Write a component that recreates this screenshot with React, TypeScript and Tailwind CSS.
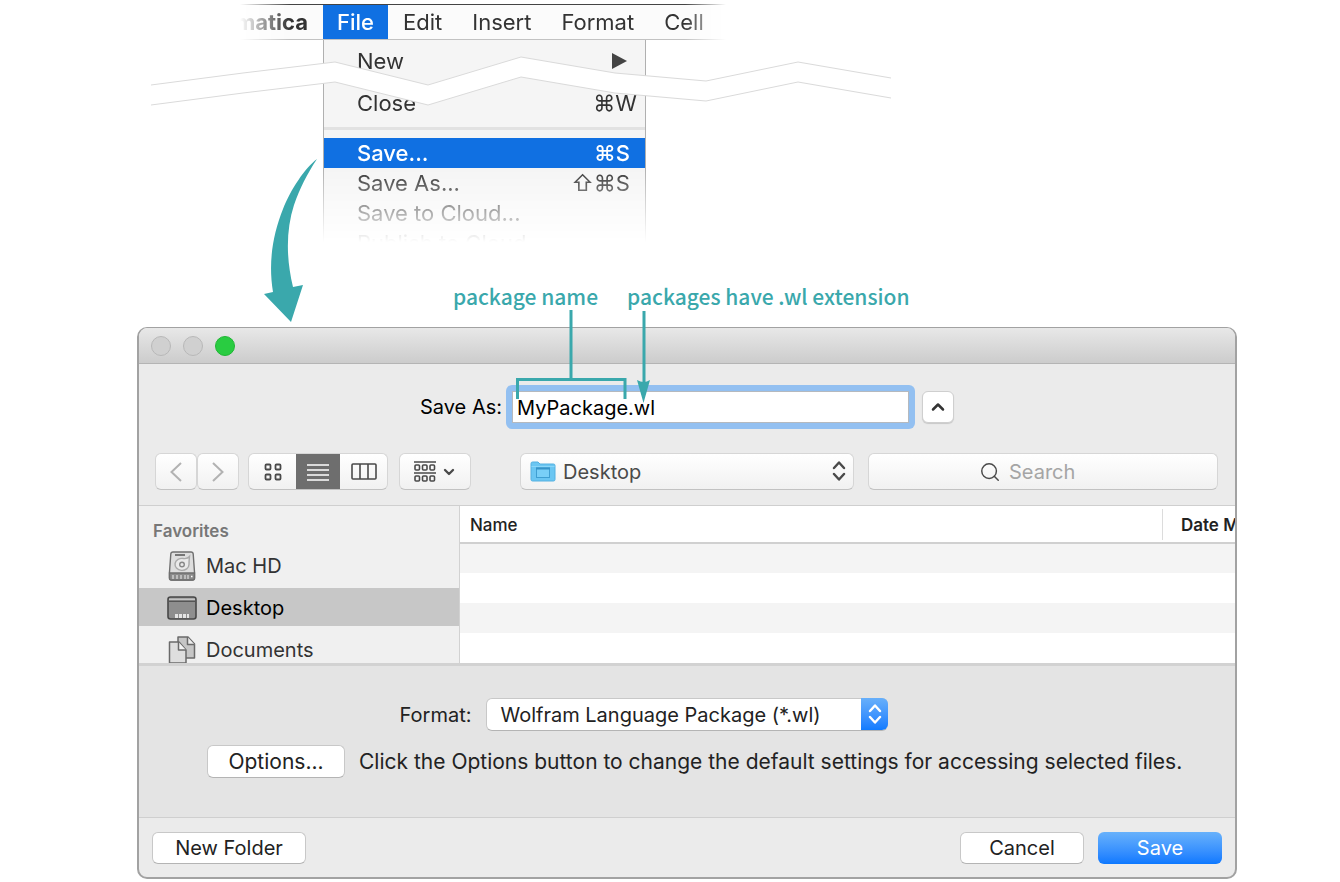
import { ChevronDown, ChevronUp, Search } from 'lucide-react';

const menus = ['Edit', 'Insert', 'Format', 'Cell'];

function UpDownChevrons({ className }: { className: string }) {
  return (
    <svg viewBox="0 0 14 20" className={className} fill="none" stroke="currentColor" strokeWidth="2.4" strokeLinecap="round" strokeLinejoin="round" aria-hidden="true">
      <path d="M2 7 7 1.5 12 7M2 13l5 5.500 5-5.500" />
    </svg>
  );
}

function DriveIcon() {
  return (
    <svg viewBox="0 0 28 30" className="h-[30px] w-7" fill="none" stroke="#6f6f6f" strokeWidth="1.400" aria-hidden="true">
      <path d="M5 1h18q2 0 2.200 2L26.500 21v6q0 2-2 2h-21q-2 0-2-2v-6L2.800 3Q3 1 5 1Z" fill="#dedede" />
      <path d="M1.500 22h25v5q0 2-2 2h-21q-2 0-2-2Z" fill="#8a8a8a" />
      <path d="M5 24v4M9 24v4M13 24v4M17 24v4M20 24v4" stroke="#c8c8c8" strokeWidth="1.600" />
      <path d="M23 25.500h1.500" stroke="#fff" />
      <path d="M7 4h10" stroke="#777" strokeWidth="2" />
      <path d="M21.500 5.500q-2 2.500-6 2a7 6 0 1 0 5.500 6q0-4 .500-8Z" fill="#eaeaea" stroke="#aaa" />
      <circle cx="14" cy="13.500" r="2.300" stroke="#888" />
    </svg>
  );
}

function DesktopIcon() {
  return (
    <svg viewBox="0 0 30 24" className="h-6 w-[30px]" aria-hidden="true">
      <rect x="1" y="1" width="28" height="22" rx="2.500" fill="#8e8e8e" stroke="#484848" strokeWidth="1.600" />
      <path d="M2 2.500h26v2H2z" fill="#c4c4c4" />
      <path d="M2 5.200h26" stroke="#484848" strokeWidth="1.200" />
      <path d="M8 18h3v4H8zM12 18h3v4h-3zM16 18h3v4h-3zM20 18h2v4h-2z" fill="#e4e4e4" />
    </svg>
  );
}

function DocumentsIcon() {
  return (
    <svg viewBox="0 0 28 28" className="h-7 w-7" stroke="#6a6a6a" strokeWidth="1.500" strokeLinejoin="round" aria-hidden="true">
      <path d="M10 1h10l6.500 7v14H10Z" fill="#c6c6c6" />
      <path d="M19.500 1v7.500h7" fill="#eee" />
      <path d="M1.500 6H11l7 8v13H1.500Z" fill="#dedede" />
      <path d="M10.500 6v8H18" fill="#f4f4f4" />
    </svg>
  );
}

function FolderIcon() {
  return (
    <svg viewBox="0 0 26 21" className="h-[21px] w-[26px]" aria-hidden="true">
      <path d="M1 2.500Q1 1 2.500 1H8l2 2h13.500Q25 3 25 4.500v14q0 1.500-1.500 1.500h-21Q1 20 1 18.500Z" fill="#6bc6f2" stroke="#55b0e0" />
      <path d="M1.500 5.500h23" stroke="#8bd6f8" />
      <rect x="6.500" y="7" width="13" height="9.500" fill="#79cff7" stroke="#3f9fd2" />
      <path d="M6 7.500h14" stroke="#3693c8" strokeWidth="2" />
    </svg>
  );
}

function AppMenu() {
  return (
    <div className="text-[22px] text-[#333]">
      <nav className="ml-[240px] mt-1 flex h-9 w-[486px] overflow-hidden border-b border-t border-b-[#c2c2c2] border-t-[#444] bg-[#fbfbfb] [mask-image:linear-gradient(to_right,transparent,black_50px,black_445px,transparent)]">
        <span className="flex w-[83px] shrink-0 items-center justify-end pr-[15px] font-bold">matica</span>
        <button className="shrink-0 bg-[#1070e2] px-[14px] font-medium text-white">File</button>
        {menus.map((menu) => (
          <button key={menu} className="shrink-0 px-[15px]">{menu}</button>
        ))}
      </nav>
      <ul className="ml-[323px] h-[202px] w-[323px] overflow-hidden border-x border-[#b0b0b0] bg-[#f5f5f5] pt-[6px] leading-[30px] [mask-image:linear-gradient(to_bottom,black_128px,transparent)]">
        <li className="flex items-center justify-between pl-[33px] pr-[18px]">
          New
          <svg viewBox="0 0 15 16" className="h-4 w-[15px]" fill="#444" aria-hidden="true"><path d="M0 0 15 8 0 16Z" /></svg>
        </li>
        <li className="mt-3 flex justify-between pl-[33px] pr-2">
          Close <kbd className="font-[Inter,'DejaVu_Sans',sans-serif]">⌘W</kbd>
        </li>
        <li className="mb-2 mt-[9px] h-[3px] bg-[#e2e2e2]" role="separator" />
        <li className="flex justify-between bg-[#1070e2] pl-[33px] pr-[15px] font-medium text-white">
          Save... <kbd className="font-[Inter,'DejaVu_Sans',sans-serif]">⌘S</kbd>
        </li>
        <li className="flex justify-between pl-[33px] pr-[15px]">
          Save As... <kbd className="font-[Inter,'DejaVu_Sans',sans-serif]">⇧⌘S</kbd>
        </li>
        <li className="pl-[33px]">Save to Cloud...</li>
        <li className="pl-[33px]">Publish to Cloud...</li>
      </ul>

      {/* Torn strip across the shortened menu */}
      <svg viewBox="0 0 742 52" className="absolute left-[151px] top-[55px] h-[52px] w-[742px]" aria-hidden="true">
        <path d="M0 30 92 18 184 7 277 30 370 2 464 18 555 26 647 7 740 23V43L647 27 555 46 464 38 370 22 277 50 184 27 92 38 0 50Z" fill="#fff" />
        <path d="M0 30 92 18 184 7 277 30 370 2 464 18 555 26 647 7 740 23M740 43 647 27 555 46 464 38 370 22 277 50 184 27 92 38 0 50" fill="none" stroke="#dadada" />
      </svg>
      <svg viewBox="0 0 56 166" className="absolute left-[263px] top-[158px] h-[166px] w-14" fill="#3aa8ac" aria-hidden="true">
        <path d="M54 1C42 10 28 31 20 51C10 76 5 104 10 134L1 136 28 164 40 127 30 129C23 100 23 72 31 47C37 30 44 16 54 1Z" />
      </svg>
    </div>
  );
}

function Callouts() {
  return (
    <div className="relative flex gap-[29px] pb-[15px] pl-[453px] pt-[38px] font-['Noto_Sans_CJK_SC',sans-serif] text-[21px] font-medium leading-8 text-[#3aa8ac]">
      <span className="whitespace-nowrap">package name</span>
      <span className="whitespace-nowrap">packages have .wl extension</span>
      <svg viewBox="0 0 140 94" className="pointer-events-none absolute left-[514px] top-[68px] z-10 h-[94px] w-[140px]" fill="none" stroke="#3aa8ac" strokeWidth="3" aria-hidden="true">
        <path d="M57 0V69M3.500 89V69.500H111V89M130 1V75" />
        <path d="M123 70q7 4 13 0L129.500 93Z" fill="#3aa8ac" stroke="none" />
      </svg>
    </div>
  );
}

function SaveRow() {
  return (
    <div className="flex items-center justify-center">
      <label htmlFor="filename" className="pr-1">Save As:</label>
      <div className="rounded-md bg-[#93c0f1] p-[6px]">
        <input
          id="filename"
          defaultValue="MyPackage.wl"
          className="block h-8 w-[397px] border border-[#b5b9be] bg-white px-1 pt-[2px] outline-none"
        />
      </div>
      <button type="button" aria-label="Collapse" className="ml-[7px] flex h-8 w-8 items-center justify-center rounded-md border border-[#cfcfcf] bg-white shadow-[0_1px_1px_rgba(0,0,0,0.15)]">
        <ChevronUp className="h-5 w-5 text-[#333]" strokeWidth={3} />
      </button>
    </div>
  );
}

function Toolbar() {
  return (
    <div className="mt-6 flex h-[37px] pl-4 pr-[17px] text-[#4a4a4a]">
      <button type="button" aria-label="Back" className="flex w-[42px] items-center justify-center rounded-md border border-[#d6d6d6] border-b-[#c2c2c2] bg-linear-to-b from-white to-[#f1f1f1]">
        <svg viewBox="0 0 12 20" className="h-5 w-3" fill="none" stroke="#b2b2b2" strokeWidth="2" aria-hidden="true"><path d="M11 1 1.500 10 11 19" /></svg>
      </button>
      <button type="button" aria-label="Forward" className="flex w-[42px] items-center justify-center rounded-md border border-[#d6d6d6] border-b-[#c2c2c2] bg-linear-to-b from-white to-[#f1f1f1]">
        <svg viewBox="0 0 12 20" className="h-5 w-3" fill="none" stroke="#b2b2b2" strokeWidth="2" aria-hidden="true"><path d="M1 1 10.500 10 1 19" /></svg>
      </button>

      <div className="ml-[9px] flex w-[140px] overflow-hidden rounded-md border border-[#d6d6d6] border-b-[#c2c2c2] bg-linear-to-b from-white to-[#f1f1f1]">
        <button type="button" aria-label="Icon view" className="flex w-[47px] items-center justify-center">
          <svg viewBox="0 0 18 18" className="h-[18px] w-[18px]" fill="none" stroke="currentColor" strokeWidth="1.800" aria-hidden="true">
            <rect x="1.500" y="1.500" width="5" height="5" rx="1" />
            <rect x="11.500" y="1.500" width="5" height="5" rx="1" />
            <rect x="1.500" y="11.500" width="5" height="5" rx="1" />
            <rect x="11.500" y="11.500" width="5" height="5" rx="1" />
          </svg>
        </button>
        <button type="button" aria-label="List view" className="flex w-11 items-center justify-center bg-[#6e6e6e]">
          <svg viewBox="0 0 24 18" className="h-[18px] w-6" stroke="#fff" strokeWidth="1.700" aria-hidden="true"><path d="M1 2h22M1 7h22M1 12h22M1 17h22" /></svg>
        </button>
        <button type="button" aria-label="Column view" className="flex flex-1 items-center justify-center">
          <svg viewBox="0 0 26 17" className="h-[17px] w-[26px]" fill="none" stroke="currentColor" strokeWidth="1.600" aria-hidden="true">
            <rect x="1" y="1" width="24" height="15" rx="1" />
            <path d="M9 1v15M17 1v15" />
          </svg>
        </button>
      </div>

      <button type="button" aria-label="Group by" className="ml-[11px] flex w-[72px] items-center justify-center gap-1 rounded-md border border-[#d6d6d6] border-b-[#c2c2c2] bg-linear-to-b from-white to-[#f1f1f1]">
        <svg viewBox="0 0 24 22" className="h-[22px] w-6" fill="none" stroke="currentColor" strokeWidth="1.600" aria-hidden="true">
          <path d="M1 1h22M1 12h22" />
          <rect x="2" y="4" width="4.500" height="5" rx="1" />
          <rect x="9.500" y="4" width="4.500" height="5" rx="1" />
          <rect x="17" y="4" width="4.500" height="5" rx="1" />
          <rect x="2" y="15" width="4.500" height="5" rx="1" />
          <rect x="9.500" y="15" width="4.500" height="5" rx="1" />
          <rect x="17" y="15" width="4.500" height="5" rx="1" />
        </svg>
        <ChevronDown className="h-4 w-4" strokeWidth={3.5} />
      </button>

      <div className="relative ml-[49px] w-[334px]">
        <select aria-label="Location" className="h-full w-full appearance-none rounded-md border border-[#d6d6d6] border-b-[#c2c2c2] bg-linear-to-b from-white to-[#f1f1f1] pl-[42px]">
          <option>Desktop</option>
        </select>
        <span className="pointer-events-none absolute left-[10px] top-2"><FolderIcon /></span>
        <UpDownChevrons className="pointer-events-none absolute right-2 top-2 h-5 w-[14px]" />
      </div>

      <label className="ml-[14px] flex flex-1 items-center justify-center gap-2 rounded-md border border-[#d6d6d6] border-b-[#c2c2c2] bg-linear-to-b from-white to-[#f1f1f1]">
        <Search className="h-[22px] w-[22px]" strokeWidth={1.6} />
        <input aria-label="Search" placeholder="Search" className="w-[98px] bg-transparent outline-none placeholder:text-[#a5a5a5]" />
      </label>
    </div>
  );
}

function FileBrowser() {
  const places = [
    { name: 'Mac HD', icon: DriveIcon, style: 'text-[#333]' },
    { name: 'Desktop', icon: DesktopIcon, style: 'bg-[#c7c7c7] text-black' },
    { name: 'Documents', icon: DocumentsIcon, style: 'text-[#333]' }
  ];

  return (
    <div className="flex h-[160px] overflow-hidden border-b-[3px] border-[#d2d2d2]">
      <aside className="w-[321px] shrink-0 border-r border-[#d2d2d2] bg-[#f0f0f0]">
        <h2 className="h-10 pl-[14px] pt-[13px] text-[17px] font-semibold leading-6 text-[#777]">Favorites</h2>
        <ul className="flex flex-col gap-1">
          {places.map((place) => {
            const Icon = place.icon;
            return (
              <li key={place.name}>
                <button type="button" className={`${place.style} flex h-[38px] w-full items-center pl-7 pt-px text-left`}>
                  <span className="flex w-[30px] justify-center"><Icon /></span>
                  <span className="pl-[9px]">{place.name}</span>
                </button>
              </li>
            );
          })}
        </ul>
      </aside>
      <div className="min-w-0 flex-1 overflow-hidden bg-white">
        <table className="w-full table-fixed border-collapse text-left text-[17px]">
          <thead>
            <tr className="h-[37px] border-b-2 border-[#d0d0d0] text-[#222]">
              <th className="py-0 pl-[10px] pr-0 pt-[2px] font-medium">Name</th>
              <th className="w-[73px] overflow-hidden whitespace-nowrap p-0 font-semibold">
                <div className="flex h-[31px] items-center border-l border-[#dcdcdc] pl-[18px] pt-[2px]">Date Modified</div>
              </th>
            </tr>
          </thead>
          <tbody>
            {[0, 1, 2, 3].map((row) => (
              <tr key={row} className="h-[30px] odd:bg-[#f4f4f4]">
                <td />
                <td />
              </tr>
            ))}
          </tbody>
        </table>
      </div>
    </div>
  );
}

function SaveDialog() {
  return (
    <form onSubmit={(e) => e.preventDefault()} className="ml-[137px] mr-[103px] overflow-hidden rounded-[10px] border-2 border-t border-[#a2a2a2] bg-[#ebebeb]">
      <div className="flex h-9 items-center gap-3 border-b border-[#b4b4b4] bg-linear-to-b from-[#e8e8e8] to-[#cccccc] pl-3">
        <button type="button" aria-label="Close" className="h-5 w-5 rounded-full border border-[#b8b8b8] bg-[#d0d0d0]" />
        <button type="button" aria-label="Minimize" className="h-5 w-5 rounded-full border border-[#b8b8b8] bg-[#d0d0d0]" />
        <button type="button" aria-label="Zoom" className="h-5 w-5 rounded-full border border-[#1fb634] bg-[#29cc41]" />
      </div>

      <div className="border-b border-[#cfcfcf] pb-[15px] pt-[21px]">
        <SaveRow />
        <Toolbar />
      </div>

      <FileBrowser />

      {/* Format and options */}
      <div className="bg-[#e4e4e4] pb-[39px] pt-8 text-[#222]">
        <div className="flex items-center justify-center pr-[86px]">
          <label htmlFor="format" className="pr-[15px]">Format:</label>
          <div className="relative flex">
            <select id="format" className="h-[33px] w-[402px] appearance-none rounded-md border border-[#c8c8c8] border-b-[#b4b4b4] bg-white pl-[13px]">
              <option>Wolfram Language Package (*.wl)</option>
            </select>
            <span className="pointer-events-none absolute right-0 top-0 flex h-8 w-[27px] items-center justify-center rounded-r-md bg-linear-to-b from-[#67affa] to-[#0f7bff] text-white">
              <UpDownChevrons className="h-5 w-[14px]" />
            </span>
          </div>
        </div>
        <div className="mt-[14px] flex items-center gap-[14px] pl-[68px] text-[21px]">
          <button type="button" className="h-[33px] w-[138px] rounded-md border border-[#c8c8c8] border-b-[#b4b4b4] bg-white">Options...</button>
          <p className="whitespace-nowrap">Click the Options button to change the default settings for accessing selected files.</p>
        </div>
      </div>

      <div className="flex border-t border-[#cfcfcf] px-[13px] pb-[13px] pt-[14px] text-[#222]">
        <button type="button" className="h-8 w-[154px] rounded-md border border-[#c8c8c8] border-b-[#b4b4b4] bg-white">New Folder</button>
        <button type="button" className="ml-auto h-8 w-[124px] rounded-md border border-[#c8c8c8] border-b-[#b4b4b4] bg-white">Cancel</button>
        <button type="submit" className="ml-[14px] h-8 w-[124px] rounded-md bg-linear-to-b from-[#67b1fb] to-[#0a78ff] text-white">Save</button>
      </div>
    </form>
  );
}

export default function App() {
  return (
    <main className="relative flow-root bg-white font-[Inter,sans-serif] text-xl leading-6 text-black">
      <AppMenu />
      <Callouts />
      <SaveDialog />
    </main>
  );
}
